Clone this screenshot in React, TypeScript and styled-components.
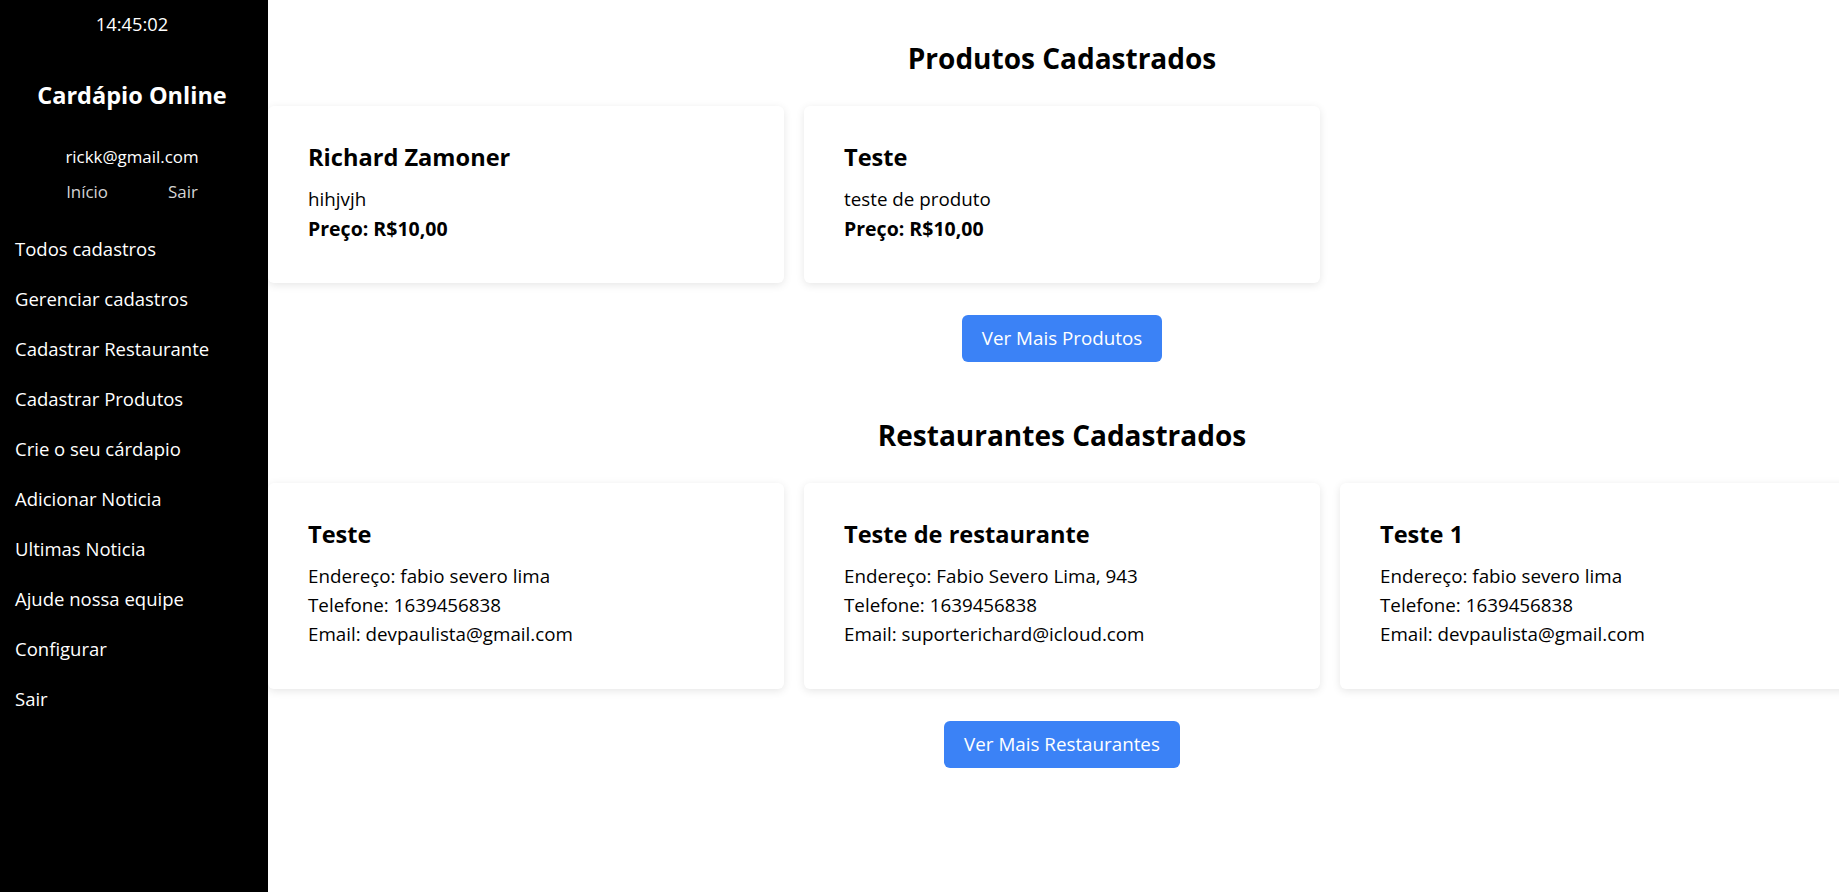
import React from "react";
import styled, { createGlobalStyle } from "styled-components";

const GlobalStyle = createGlobalStyle`
  html, body {
    margin: 0;
    padding: 0;
    overflow: hidden;
    background: #ffffff;
  }
  body {
    font-family: "Segoe UI", "Open Sans", "Noto Sans", sans-serif;
    color: #000;
  }
  * { box-sizing: border-box; }
`;

const Page = styled.div`
  display: flex;
  align-items: stretch;
  min-height: 892px;
`;

const Sidebar = styled.aside`
  flex: 0 0 268px;
  width: 268px;
  background: #000;
  color: #fff;
  display: flex;
  flex-direction: column;
  padding: 12px 4px 0 0;
`;

const Clock = styled.div`
  text-align: center;
  font-size: 18.3px;
  line-height: 24px;
`;

const Brand = styled.h2`
  margin: 44px 0 0;
  text-align: center;
  font-size: 23.5px;
  line-height: 30px;
  font-weight: 700;
`;

const UserEmail = styled.div`
  margin-top: 36px;
  text-align: center;
  font-size: 16.9px;
  line-height: 22px;
`;

const UserLinks = styled.div`
  margin-top: 13px;
  display: flex;
  justify-content: center;
  gap: 60px;
  font-size: 16.9px;
  line-height: 22px;
  color: #d4d4d4;
`;

const NavList = styled.nav`
  margin-top: 21px;
  display: flex;
  flex-direction: column;
`;

const NavItem = styled.a`
  display: block;
  padding-left: 15px;
  font-size: 18.5px;
  line-height: 50px;
  height: 50px;
  color: #fff;
  text-decoration: none;
`;

const Main = styled.main`
  flex: 0 0 1588px;
  width: 1588px;
  display: flex;
  flex-direction: column;
`;

const Section = styled.section<{ $top: number }>`
  display: flex;
  flex-direction: column;
  align-items: center;
  padding-top: ${(p) => p.$top}px;
`;

const SectionTitle = styled.h2`
  margin: 0;
  font-size: 28px;
  line-height: 34px;
  font-weight: 700;
  text-align: center;
`;

const CardGrid = styled.div`
  margin-top: 31px;
  width: 100%;
  display: grid;
  grid-template-columns: repeat(3, 516px);
  gap: 20px;
`;

const Card = styled.div`
  background: #fff;
  border-radius: 6px;
  box-shadow: 0 2px 8px rgba(0, 0, 0, 0.1);
  padding: 36px 40px 40px;
`;

const CardTitle = styled.h3`
  margin: 0 0 13px;
  font-size: 23.6px;
  line-height: 30px;
  font-weight: 700;
`;

const CardText = styled.p<{ $bold?: boolean }>`
  margin: 0;
  font-size: ${(p) => (p.$bold ? "19.5px" : "18.8px")};
  line-height: 29px;
  font-weight: ${(p) => (p.$bold ? 700 : 400)};
`;

const MoreButton = styled.button`
  margin-top: 32px;
  background: #3b82f6;
  color: #fff;
  border: none;
  border-radius: 6px;
  font-family: inherit;
  font-size: 18.8px;
  line-height: 27px;
  padding: 10px 20px;
  cursor: pointer;
`;

const navItems = [
  "Todos cadastros",
  "Gerenciar cadastros",
  "Cadastrar Restaurante",
  "Cadastrar Produtos",
  "Crie o seu cárdapio",
  "Adicionar Noticia",
  "Ultimas Noticia",
  "Ajude nossa equipe",
  "Configurar",
  "Sair",
];

const products = [
  { name: "Richard Zamoner", desc: "hihjvjh", price: "R$10,00" },
  { name: "Teste", desc: "teste de produto", price: "R$10,00" },
];

const restaurants = [
  {
    name: "Teste",
    address: "fabio severo lima",
    phone: "1639456838",
    email: "devpaulista@gmail.com",
  },
  {
    name: "Teste de restaurante",
    address: "Fabio Severo Lima, 943",
    phone: "1639456838",
    email: "suporterichard@icloud.com",
  },
  {
    name: "Teste 1",
    address: "fabio severo lima",
    phone: "1639456838",
    email: "devpaulista@gmail.com",
  },
];

export default function App() {
  return (
    <>
      <GlobalStyle />
      <Page>
        <Sidebar>
          <Clock>14:45:02</Clock>
          <Brand>Cardápio Online</Brand>
          <UserEmail>rickk@gmail.com</UserEmail>
          <UserLinks>
            <span>Início</span>
            <span>Sair</span>
          </UserLinks>
          <NavList>
            {navItems.map((item) => (
              <NavItem key={item}>{item}</NavItem>
            ))}
          </NavList>
        </Sidebar>
        <Main>
          <Section $top={41}>
            <SectionTitle>Produtos Cadastrados</SectionTitle>
            <CardGrid>
              {products.map((p) => (
                <Card key={p.name}>
                  <CardTitle>{p.name}</CardTitle>
                  <CardText>{p.desc}</CardText>
                  <CardText $bold>Preço: {p.price}</CardText>
                </Card>
              ))}
            </CardGrid>
            <MoreButton>Ver Mais Produtos</MoreButton>
          </Section>
          <Section $top={56}>
            <SectionTitle>Restaurantes Cadastrados</SectionTitle>
            <CardGrid>
              {restaurants.map((r) => (
                <Card key={r.name}>
                  <CardTitle>{r.name}</CardTitle>
                  <CardText>Endereço: {r.address}</CardText>
                  <CardText>Telefone: {r.phone}</CardText>
                  <CardText>Email: {r.email}</CardText>
                </Card>
              ))}
            </CardGrid>
            <MoreButton>Ver Mais Restaurantes</MoreButton>
          </Section>
        </Main>
      </Page>
    </>
  );
}
